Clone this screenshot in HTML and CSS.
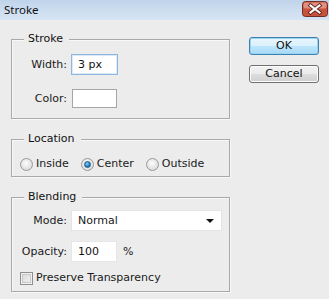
FILE: index.html
```html
<!DOCTYPE html>
<html>
<head>
<meta charset="utf-8">
<link rel="stylesheet" href="styles.css">
</head>
<body>
<div class="window">
  <div class="titlebar">
    <span class="title">Stroke</span>
    <span class="close" role="button" aria-label="Close">
      <svg width="26" height="16" viewBox="0 0 26 16">
        <rect x="0.5" y="0.5" width="25" height="15" rx="3" fill="#c8523c" stroke="#6e2f26"/>
        <rect x="1.5" y="1.5" width="23" height="6" rx="2" fill="#e09080"/>
        <path d="M8.5 4.5 L17.5 11.5 M17.5 4.5 L8.5 11.5" stroke="#5e241c" stroke-width="4" stroke-linecap="square" fill="none"/>
        <path d="M8.5 4.5 L17.5 11.5 M17.5 4.5 L8.5 11.5" stroke="#ffffff" stroke-width="2.2" stroke-linecap="square" fill="none"/>
      </svg>
    </span>
  </div>
  <div class="content">
    <div class="groups">
      <section class="group g-stroke">
        <div class="legend">Stroke</div>
        <div class="row r-width">
          <span class="label">Width:</span>
          <input class="field f-width" type="text" value="3 px">
        </div>
        <div class="row r-color">
          <span class="label">Color:</span>
          <span class="swatch"></span>
        </div>
      </section>
      <section class="group g-location">
        <div class="legend">Location</div>
        <div class="radios">
          <label class="opt"><span class="radio"></span>Inside</label>
          <label class="opt"><span class="radio checked"></span>Center</label>
          <label class="opt"><span class="radio"></span>Outside</label>
        </div>
      </section>
      <section class="group g-blending">
        <div class="legend">Blending</div>
        <div class="row r-mode">
          <span class="label">Mode:</span>
          <div class="select"><span>Normal</span><span class="arrow"></span></div>
        </div>
        <div class="row r-opacity">
          <span class="label">Opacity:</span>
          <input class="field f-opacity" type="text" value="100">
          <span class="pct">%</span>
        </div>
        <label class="check-row"><span class="check"></span>Preserve Transparency</label>
      </section>
    </div>
    <div class="buttons">
      <button class="btn ok">OK</button>
      <button class="btn cancel">Cancel</button>
    </div>
  </div>
</div>
</body>
</html>
```
FILE: styles.css
```css
* { box-sizing: border-box; }
html, body { margin: 0; padding: 0; }
body {
  width: 329px;
  height: 299px;
  overflow: hidden;
  background: #ececec;
  font-family: "DejaVu Sans", sans-serif;
  font-size: 11px;
  color: #1a1a1a;
}
.window { width: 329px; height: 299px; background: #ececec; }

.titlebar {
  height: 20px;
  display: flex;
  align-items: center;
  justify-content: space-between;
  padding: 0 1px 0 4px;
  background: linear-gradient(#bfd3ea, #cfdff1 60%, #d6e4f4);
}
.title {
  font-family: "Noto Sans", "Open Sans", sans-serif;
  font-weight: 400;
  font-size: 11.5px;
  color: #111;
  line-height: 20px;
}
.close {
  flex: none;
  width: 26px;
  height: 16px;
  margin-top: -2px;
  display: block;
}
.close svg { display: block; }

.content {
  display: flex;
  align-items: flex-start;
  padding: 17px 0 0 11px;
}
.groups { width: 219px; margin-top: 2px; }

.group {
  border: 1px solid #a9a9a9;
  box-shadow: inset 1px 1px 0 #f8f8f8, 1px 1px 0 #f8f8f8;
}
.group + .group { margin-top: 20px; }
.legend {
  margin: -8px 0 0 12px;
  padding: 0 6px 0 4px;
  width: fit-content;
  line-height: 14px;
  height: 14px;
  background: #ececec;
  color: #111;
}

.row {
  display: grid;
  grid-template-columns: 55px auto auto;
  column-gap: 4px;
  align-items: center;
  justify-content: start;
}
.label { text-align: right; line-height: 14px; }

.g-stroke { padding-bottom: 10px; }
.r-width { margin-top: 8px; height: 21px; }
.r-color { margin-top: 14px; height: 19px; }

.field {
  font: inherit;
  color: #111;
  height: 21px;
  padding: 0 6px;
  background: #fff;
  outline: none;
  margin: 0;
}
.f-width {
  width: 47px;
  border: 1px solid #8fb6e0;
  box-shadow: inset 0 0 0 1px #dce9f7;
}
.swatch {
  display: block;
  width: 45px;
  height: 19px;
  margin-left: 1px;
  background: #fff;
  border: 1px solid #a6a6a6;
}

.g-location { padding-bottom: 5px; }
.radios {
  display: flex;
  align-items: center;
  margin: 11px 0 0 8px;
  height: 14px;
  column-gap: 12px;
}
.opt {
  display: flex;
  align-items: center;
  column-gap: 3px;
  line-height: 14px;
}
.radio {
  width: 13px;
  height: 13px;
  border-radius: 50%;
  border: 1px solid #9a9a9a;
  background: radial-gradient(circle at 45% 40%, #fdfdfd, #e2e2e2 60%, #cfcfcf);
  display: flex;
  align-items: center;
  justify-content: center;
}
.radio.checked::after {
  content: "";
  width: 7px;
  height: 7px;
  border-radius: 50%;
  background: radial-gradient(circle at 40% 35%, #8fd0f5, #1f7cc0 60%, #11508a);
  border: 1px solid #1d5e8f;
  box-sizing: border-box;
}

.g-blending { padding-bottom: 6px; }
.r-mode { margin-top: 6px; height: 21px; }
.select {
  width: 151px;
  height: 21px;
  background: #fff;
  border: 1px solid #e4e4e4;
  display: flex;
  align-items: center;
  justify-content: space-between;
  padding: 0 7px 0 6px;
  line-height: 14px;
}
.arrow {
  width: 0;
  height: 0;
  border-left: 4px solid transparent;
  border-right: 4px solid transparent;
  border-top: 4px solid #111;
  margin-top: 1px;
}
.r-opacity { margin-top: 10px; height: 21px; column-gap: 4px; }
.f-opacity {
  width: 46px;
  border: 1px solid #e6e6e6;
}
.pct { margin-left: 2px; line-height: 14px; }

.check-row {
  display: flex;
  align-items: center;
  column-gap: 3px;
  margin: 9px 0 0 8px;
  height: 14px;
  line-height: 14px;
}
.check {
  width: 13px;
  height: 13px;
  border: 1px solid #8e8f8f;
  background: linear-gradient(135deg, #d6d6d6, #f4f4f4);
  box-shadow: inset 0 0 0 1px #f0f0f0, inset 0 0 0 2px #c9c9c9;
}

.buttons {
  display: flex;
  flex-direction: column;
  row-gap: 10px;
  margin-left: 19px;
}
.btn {
  width: 70px;
  height: 18px;
  padding: 0;
  margin: 0;
  font: inherit;
  font-size: 11px;
  color: #111;
  border-radius: 3px;
  line-height: 16px;
}
.ok {
  border: 1px solid #3c7fb1;
  background: linear-gradient(#eaf6fd, #d9f0fc 50%, #bee6fd 51%, #a7d9f5);
  box-shadow: inset 0 0 0 1px #9bd5f4;
}
.cancel {
  border: 1px solid #707070;
  background: linear-gradient(#f2f2f2, #ebebeb 50%, #dddddd 51%, #cfcfcf);
  box-shadow: inset 0 0 0 1px #fcfcfc;
}
```
